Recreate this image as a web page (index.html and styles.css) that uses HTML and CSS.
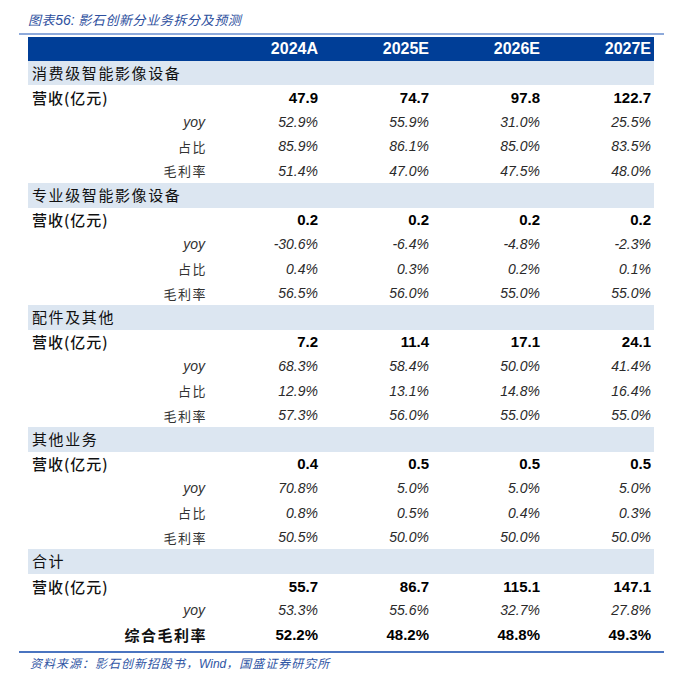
FILE: index.html
```html
<!DOCTYPE html>
<html lang="zh">
<head>
<meta charset="utf-8">
<title>影石创新分业务拆分及预测</title>
<link rel="stylesheet" href="styles.css">
</head>
<body>
<div class="page">
  <div class="title">图表<span class="en">56:</span> 影石创新分业务拆分及预测</div>
  <div class="rule-top"></div>
  <div class="table">
    <div class="row head">
      <div class="lab"></div><div class="v">2024A</div><div class="v">2025E</div><div class="v">2026E</div><div class="v">2027E</div>
    </div>

    <div class="row sec"><div class="lab">消费级智能影像设备</div></div>
    <div class="row rev"><div class="lab">营收(亿元)</div><div class="v">47.9</div><div class="v">74.7</div><div class="v">97.8</div><div class="v">122.7</div></div>
    <div class="row sub"><div class="lab en">yoy</div><div class="v">52.9%</div><div class="v">55.9%</div><div class="v">31.0%</div><div class="v">25.5%</div></div>
    <div class="row sub"><div class="lab">占比</div><div class="v">85.9%</div><div class="v">86.1%</div><div class="v">85.0%</div><div class="v">83.5%</div></div>
    <div class="row sub"><div class="lab">毛利率</div><div class="v">51.4%</div><div class="v">47.0%</div><div class="v">47.5%</div><div class="v">48.0%</div></div>

    <div class="row sec"><div class="lab">专业级智能影像设备</div></div>
    <div class="row rev"><div class="lab">营收(亿元)</div><div class="v">0.2</div><div class="v">0.2</div><div class="v">0.2</div><div class="v">0.2</div></div>
    <div class="row sub"><div class="lab en">yoy</div><div class="v">-30.6%</div><div class="v">-6.4%</div><div class="v">-4.8%</div><div class="v">-2.3%</div></div>
    <div class="row sub"><div class="lab">占比</div><div class="v">0.4%</div><div class="v">0.3%</div><div class="v">0.2%</div><div class="v">0.1%</div></div>
    <div class="row sub"><div class="lab">毛利率</div><div class="v">56.5%</div><div class="v">56.0%</div><div class="v">55.0%</div><div class="v">55.0%</div></div>

    <div class="row sec"><div class="lab">配件及其他</div></div>
    <div class="row rev"><div class="lab">营收(亿元)</div><div class="v">7.2</div><div class="v">11.4</div><div class="v">17.1</div><div class="v">24.1</div></div>
    <div class="row sub"><div class="lab en">yoy</div><div class="v">68.3%</div><div class="v">58.4%</div><div class="v">50.0%</div><div class="v">41.4%</div></div>
    <div class="row sub"><div class="lab">占比</div><div class="v">12.9%</div><div class="v">13.1%</div><div class="v">14.8%</div><div class="v">16.4%</div></div>
    <div class="row sub"><div class="lab">毛利率</div><div class="v">57.3%</div><div class="v">56.0%</div><div class="v">55.0%</div><div class="v">55.0%</div></div>

    <div class="row sec"><div class="lab">其他业务</div></div>
    <div class="row rev"><div class="lab">营收(亿元)</div><div class="v">0.4</div><div class="v">0.5</div><div class="v">0.5</div><div class="v">0.5</div></div>
    <div class="row sub"><div class="lab en">yoy</div><div class="v">70.8%</div><div class="v">5.0%</div><div class="v">5.0%</div><div class="v">5.0%</div></div>
    <div class="row sub"><div class="lab">占比</div><div class="v">0.8%</div><div class="v">0.5%</div><div class="v">0.4%</div><div class="v">0.3%</div></div>
    <div class="row sub"><div class="lab">毛利率</div><div class="v">50.5%</div><div class="v">50.0%</div><div class="v">50.0%</div><div class="v">50.0%</div></div>

    <div class="row sec"><div class="lab">合计</div></div>
    <div class="row rev"><div class="lab">营收(亿元)</div><div class="v">55.7</div><div class="v">86.7</div><div class="v">115.1</div><div class="v">147.1</div></div>
    <div class="row sub"><div class="lab en">yoy</div><div class="v">53.3%</div><div class="v">55.6%</div><div class="v">32.7%</div><div class="v">27.8%</div></div>
    <div class="row total"><div class="lab">综合毛利率</div><div class="v">52.2%</div><div class="v">48.2%</div><div class="v">48.8%</div><div class="v">49.3%</div></div>
  </div>
  <div class="rule-bottom"></div>
  <div class="source">资料来源：影石创新招股书，<span class="en">Wind</span>，国盛证券研究所</div>
</div>
</body>
</html>
```

FILE: styles.css
```css
html, body {
  margin: 0;
  padding: 0;
  background: #ffffff;
}

.page {
  width: 676px;
  height: 688px;
  padding-top: 10px;
  box-sizing: border-box;
  font-family: "Liberation Sans", "Noto Sans CJK SC", sans-serif;
}

.title {
  margin-left: 28px;
  height: 20px;
  line-height: 20px;
  font-family: "Noto Sans CJK SC", sans-serif;
  font-size: 13px;
  font-style: italic;
  letter-spacing: 0.6px;
  color: #2d4f9e;
}

.title .en {
  font-family: "Liberation Sans", sans-serif;
  font-size: 14px;
  letter-spacing: 0;
}

.rule-top {
  margin: 3px 0 0 19px;
  width: 645px;
  height: 2px;
  background: #8eaadb;
}

.table {
  margin: 2px 0 0 28px;
  width: 626px;
}

.row {
  display: grid;
  grid-template-columns: 182px repeat(4, 111px);
  height: 24.43px;
  align-items: center;
}

.row .v {
  text-align: right;
  padding-right: 3px;
  white-space: nowrap;
}

.lab {
  white-space: nowrap;
  font-family: "Noto Sans CJK SC", sans-serif;
}

.head {
  height: 24px;
  background: #003e97;
  color: #ffffff;
  font-weight: bold;
  font-size: 16px;
}

.head .v {
  font-family: "Liberation Sans", sans-serif;
}

.sec {
  display: block;
  background: #dce6f1;
  line-height: 24.43px;
}

.sec .lab {
  padding-left: 4px;
  font-size: 15px;
  letter-spacing: 1.6px;
  color: #111111;
}

.rev .lab {
  padding-left: 4px;
  font-size: 15px;
  font-weight: 500;
  letter-spacing: 1px;
  color: #111111;
}

.rev .v {
  font-size: 15px;
  font-weight: bold;
  color: #000000;
}

.sub .lab {
  text-align: right;
  padding-right: 3px;
  font-size: 13px;
  letter-spacing: 1.5px;
  color: #333333;
}

.sub .lab.en {
  font-family: "Liberation Sans", sans-serif;
  font-style: italic;
  font-size: 14px;
  letter-spacing: 0;
  padding-right: 5px;
}

.sub .v {
  font-size: 14px;
  font-style: italic;
  color: #2a2a2a;
}

.total .lab {
  text-align: right;
  padding-right: 3px;
  font-size: 15px;
  font-weight: bold;
  letter-spacing: 1.5px;
  color: #111111;
}

.total .v {
  font-size: 15px;
  font-weight: bold;
  color: #000000;
}

.rule-bottom {
  margin: 4px 0 0 19px;
  width: 645px;
  height: 1.5px;
  background: #4a74c0;
}

.source {
  margin: 3px 0 0 30px;
  height: 14px;
  line-height: 14px;
  font-family: "Noto Sans CJK SC", sans-serif;
  font-size: 12px;
  font-style: italic;
  letter-spacing: 1px;
  color: #2f55a4;
}

.source .en {
  font-family: "Liberation Sans", sans-serif;
  letter-spacing: 0;
}
```
